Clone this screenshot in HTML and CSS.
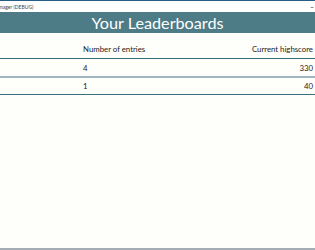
FILE: index.html
```html
<!DOCTYPE html>
<html lang="en">
<head>
  <meta charset="UTF-8">
  <title>Leaderboard Manager (DEBUG)</title>
  <link rel="stylesheet" href="styles.css">
</head>
<body>
  <div class="window">
    <div class="titlebar">
      <span class="title">nager (DEBUG)</span>
      <span class="minimize">–</span>
    </div>

    <h1 class="banner">Your Leaderboards</h1>

    <div class="board">
      <div class="row head">
        <span class="name"></span>
        <span class="entries">Number of entries</span>
        <span class="score">Current highscore</span>
      </div>
      <div class="row">
        <span class="name"></span>
        <span class="entries">4</span>
        <span class="score">330</span>
      </div>
      <div class="row last">
        <span class="name"></span>
        <span class="entries">1</span>
        <span class="score">40</span>
      </div>
    </div>

    <div class="filler"></div>
    <div class="bottom"></div>
  </div>
</body>
</html>
```

FILE: styles.css
```css
* {
  box-sizing: border-box;
}

html, body {
  margin: 0;
  padding: 0;
}

body {
  width: 315px;
  height: 250px;
  overflow: hidden;
  background: #fefefa;
  font-family: 'Lato', sans-serif;
  color: #222;
}

.window {
  display: flex;
  flex-direction: column;
  height: 250px;
  border-top: 1px solid #2a5d86;
}

.titlebar {
  display: flex;
  justify-content: space-between;
  align-items: center;
  height: 11px;
  background: #fff;
  font-size: 5px;
  color: #444;
  padding-right: 1px;
}

.minimize {
  font-size: 7px;
  color: #222;
}

.banner {
  margin: 0;
  height: 21px;
  background: #4d7b86;
  color: #fff;
  font-weight: normal;
  font-size: 16.2px;
  line-height: 21px;
  text-align: center;
}

.board {
  margin-top: 6px;
}

.row {
  display: grid;
  grid-template-columns: 83px 1fr 1fr;
  align-items: center;
  height: 19px;
  font-size: 7.8px;
  padding-right: 2px;
  border-bottom: 2px solid #9fb6be;
}

.row.head {
  height: 20px;
  border-bottom: 1px solid #3c6d7a;
}

.row.last {
  height: 17px;
  border-bottom: 1px solid #3c6d7a;
}

.score {
  text-align: right;
}

.filler {
  flex: 1;
}

.bottom {
  height: 2px;
  background: #a3adb3;
}
```
